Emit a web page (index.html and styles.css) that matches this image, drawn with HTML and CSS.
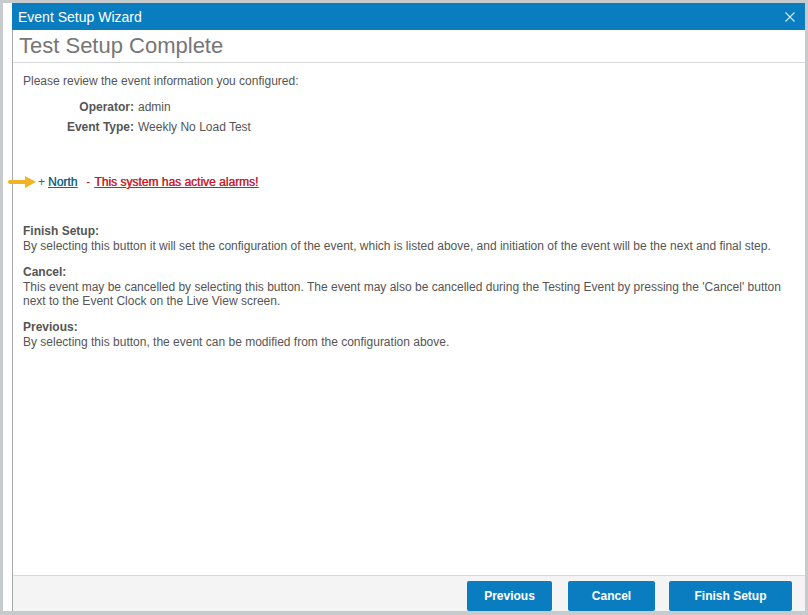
FILE: index.html
```html
<!DOCTYPE html>
<html lang="en">
<head>
    <meta charset="UTF-8">
    <title>Event Setup Wizard</title>
    <link rel="stylesheet" href="styles.css">
</head>
<body>
    <div class="frame">
        <div class="gutter"></div>
        <div class="dialog">
            <div class="titlebar">
                <span>Event Setup Wizard</span>
                <svg class="close" width="10" height="10" viewBox="0 0 10 10">
                    <path d="M0.5 0.5 L9.5 9.5 M9.5 0.5 L0.5 9.5" stroke="#cfe9f8" stroke-width="1.1" fill="none"/>
                </svg>
            </div>
            <div class="heading">Test Setup Complete</div>

            <div class="content">
                <p class="intro">Please review the event information you configured:</p>

                <div class="summary">
                    <div class="label">Operator:</div>
                    <div>admin</div>
                    <div class="label">Event Type:</div>
                    <div>Weekly No Load Test</div>
                </div>

                <div class="site">
                    <svg class="arrow" width="28" height="12" viewBox="0 0 28 12">
                        <rect x="0" y="4" width="20" height="4" rx="2" fill="#f0b323"/>
                        <path d="M17 0 L28 6 L17 12 Z" fill="#f0b323"/>
                    </svg>
                    <span class="plus">+</span>
                    <a href="#" class="north">North</a>
                    <span class="dash">-</span>
                    <a href="#" class="alarm">This system has active alarms!</a>
                </div>

                <div class="help">
                    <p><b>Finish Setup:</b>
                    By selecting this button it will set the configuration of the event, which is listed above, and initiation of the event will be the next and final step.</p>
                    <p><b>Cancel:</b>
                    This event may be cancelled by selecting this button. The event may also be cancelled during the Testing Event by pressing the 'Cancel' button next to the Event Clock on the Live View screen.</p>
                    <p><b>Previous:</b>
                    By selecting this button, the event can be modified from the configuration above.</p>
                </div>
            </div>

            <div class="footer">
                <button class="btn btn-prev">Previous</button>
                <button class="btn btn-cancel">Cancel</button>
                <button class="btn btn-finish">Finish Setup</button>
            </div>
        </div>
    </div>
</body>
</html>
```

FILE: styles.css
```css
* {
    margin: 0;
    box-sizing: border-box;
}

body {
    font-family: "Liberation Sans", Arial, sans-serif;
    margin: 0;
    background-color: #c6cbce;
    width: 808px;
    height: 615px;
    padding: 3px 3px 4px 3px;
}

.frame {
    display: flex;
    height: 100%;
    background-color: #fff;
}

.gutter {
    width: 9px;
    background-color: #fff;
}

.dialog {
    flex: 1;
    display: flex;
    flex-direction: column;
    border-left: 1px solid #a9a9a9;
    background-color: #fff;
}

.titlebar {
    height: 27px;
    background-color: #0a7dc1;
    color: #fff;
    font-size: 14px;
    padding: 0 10px 0 6px;
    display: flex;
    align-items: center;
    justify-content: space-between;
    margin-left: -1px;
}

.heading {
    height: 33px;
    border-bottom: 1px solid #d8d8d8;
    font-size: 22px;
    color: #767676;
    padding: 3px 0 0 6px;
}

.content {
    flex: 1;
    padding: 11px 10px 0 10px;
    font-size: 12px;
    color: #555;
}

.intro {
    line-height: 14px;
}

.summary {
    display: grid;
    grid-template-columns: 111px auto;
    column-gap: 4px;
    row-gap: 6px;
    margin-top: 12px;
    line-height: 14px;
}

.label {
    text-align: right;
    font-weight: bold;
}

.site {
    display: flex;
    align-items: center;
    margin-top: 41px;
    margin-left: -15px;
    line-height: 14px;
}

.arrow {
    margin-right: 2px;
}

.plus {
    color: #1b6c8a;
    margin-right: 3px;
}

.north {
    color: #14688a;
    margin-right: 9px;
    text-shadow: 0.3px 0 0 #14688a;
}

.dash {
    color: #c8202f;
    margin-right: 4px;
}

.alarm {
    color: #cc1d2d;
    text-shadow: 0.3px 0 0 #cc1d2d;
}

.help {
    margin-top: 35px;
    line-height: 14px;
}

.help b {
    display: block;
    line-height: 15px;
}

.help p {
    margin-bottom: 12px;
}

.footer {
    height: 36px;
    background-color: #f4f4f4;
    border-top: 1px solid #d8d8d8;
    display: flex;
    justify-content: flex-end;
    align-items: flex-start;
    padding: 5px 13px 0 0;
}

.btn {
    background-color: #0a7dc1;
    color: #fff;
    font-family: "Liberation Sans", Arial, sans-serif;
    font-size: 12px;
    font-weight: bold;
    border: none;
    border-radius: 2px;
    height: 30px;
    cursor: pointer;
}

.btn-prev {
    width: 85px;
    margin-right: 16px;
}

.btn-cancel {
    width: 87px;
    margin-right: 14px;
}

.btn-finish {
    width: 123px;
}
```
